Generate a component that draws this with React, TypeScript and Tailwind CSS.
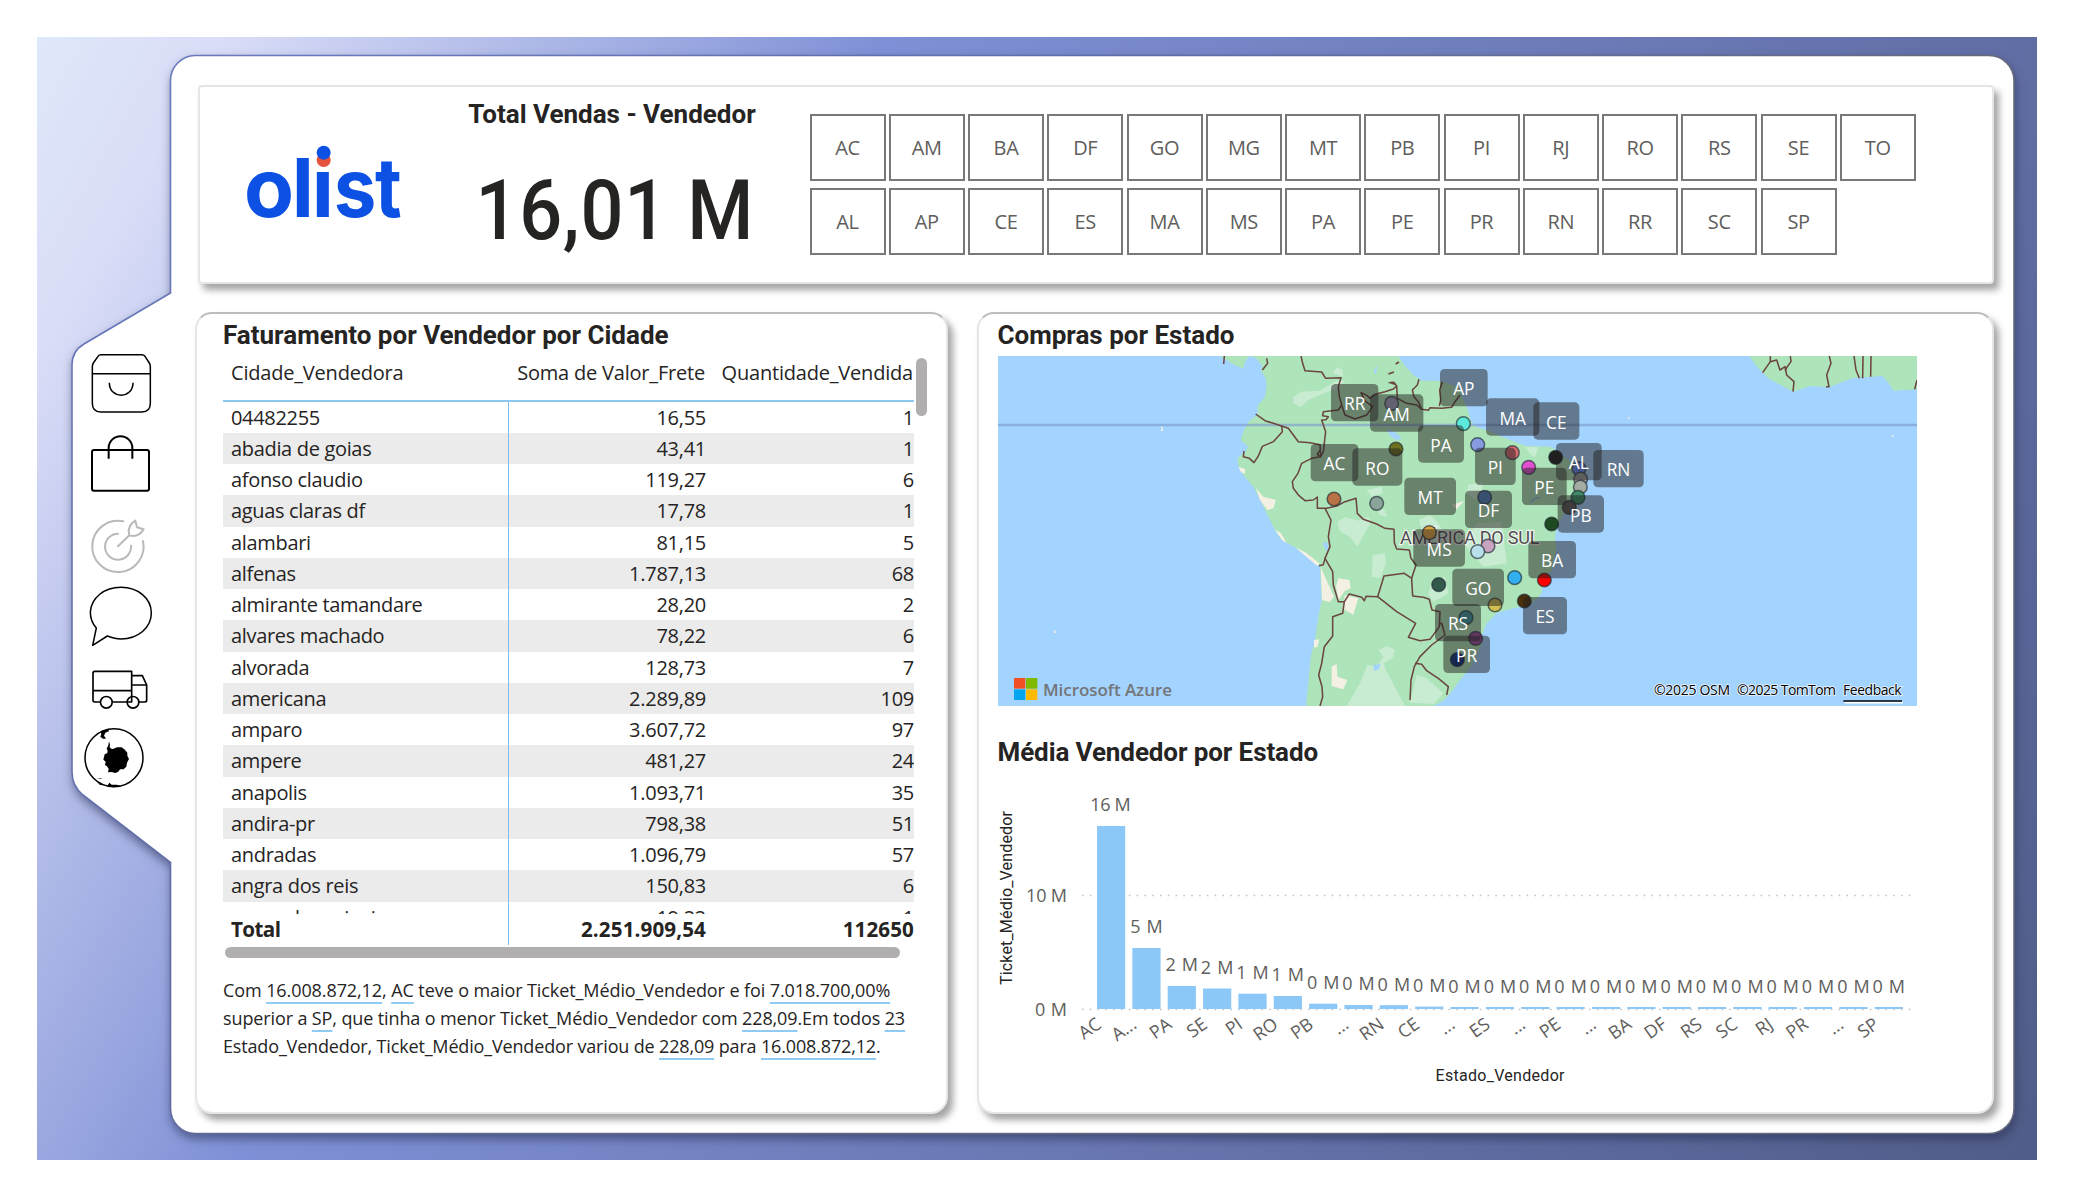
const STATES = [
  ["AC", "AM", "BA", "DF", "GO", "MG", "MT", "PB", "PI", "RJ", "RO", "RS", "SE", "TO"],
  ["AL", "AP", "CE", "ES", "MA", "MS", "PA", "PE", "PR", "RN", "RR", "SC", "SP"],
];

const ROWS: [string, string, string][] = [
  ["04482255", "16,55", "1"],
  ["abadia de goias", "43,41", "1"],
  ["afonso claudio", "119,27", "6"],
  ["aguas claras df", "17,78", "1"],
  ["alambari", "81,15", "5"],
  ["alfenas", "1.787,13", "68"],
  ["almirante tamandare", "28,20", "2"],
  ["alvares machado", "78,22", "6"],
  ["alvorada", "128,73", "7"],
  ["americana", "2.289,89", "109"],
  ["amparo", "3.607,72", "97"],
  ["ampere", "481,27", "24"],
  ["anapolis", "1.093,71", "35"],
  ["andira-pr", "798,38", "51"],
  ["andradas", "1.096,79", "57"],
  ["angra dos reis", "150,83", "6"],
  ["angra dos reis rj", "19,22", "1"],
];

// label, value label, top of the bar, baseline of the value label
const BARS: [string, string, number, number][] = [
  ["AC", "16 M", 826, 811],
  ["A...", "5 M", 948, 933],
  ["PA", "2 M", 986, 971],
  ["SE", "2 M", 988.5, 974.3],
  ["PI", "1 M", 993.7, 979],
  ["RO", "1 M", 996, 981],
  ["PB", "0 M", 1003.7, 989],
  ["...", "0 M", 1005, 990],
  ["RN", "0 M", 1005.2, 990.7],
  ["CE", "0 M", 1006.6, 992],
  ["...", "0 M", 1007, 992.7],
  ["ES", "0 M", 1007, 992.7],
  ["...", "0 M", 1007, 992.7],
  ["PE", "0 M", 1007, 992.7],
  ["...", "0 M", 1007, 992.7],
  ["BA", "0 M", 1007, 992.7],
  ["DF", "0 M", 1007, 992.7],
  ["RS", "0 M", 1007, 992.7],
  ["SC", "0 M", 1007, 992.7],
  ["RJ", "0 M", 1007, 992.7],
  ["PR", "0 M", 1007, 992.7],
  ["...", "0 M", 1007, 992.7],
  ["SP", "0 M", 1007, 992.7],
];

// label, box x, box y, box width
const PLACES: [string, number, number, number][] = [
  ["AP", 630, 57, 143],
  ["RR", 303, 102, 142],
  ["AM", 420, 133, 160],
  ["MA", 768, 145, 160],
  ["CE", 910, 157, 138],
  ["PA", 564, 226, 138],
  ["PI", 735, 293, 122],
  ["AC", 242, 282, 143],
  ["RO", 367, 295, 150],
  ["PE", 876, 353, 134],
  ["AL", 978, 279, 137],
  ["RN", 1090, 300, 151],
  ["MT", 523, 383, 155],
  ["DF", 705, 422, 141],
  ["PB", 983, 436, 139],
  ["MS", 550, 538, 155],
  ["BA", 895, 573, 143],
  ["GO", 667, 656, 155],
  ["ES", 879, 741, 132],
  ["RS", 615, 762, 138],
  ["PR", 640, 857, 140],
];

const DOTS: [number, number, string][] = [
  [485, 160, "#a4a0be"],
  [700, 221, "#5ce8da"],
  [743, 284, "#869be0"],
  [847, 308, "#d96b70"],
  [896, 352, "#e04fd0"],
  [498, 297, "#6d701f"],
  [977, 322, "#1f1f1f"],
  [1047, 356, "#6888f0"],
  [1052, 387, "#9d9d9d"],
  [1051, 411, "#a3aba3"],
  [1044, 442, "#3d8a66"],
  [1018, 472, "#5a5656"],
  [965, 522, "#1d4a20"],
  [312, 447, "#b87245"],
  [440, 460, "#8aa39b"],
  [764, 442, "#4f80c0"],
  [598, 548, "#e0a440"],
  [774, 588, "#c9a4c0"],
  [743, 605, "#b9e0ea"],
  [626, 704, "#33584c"],
  [854, 683, "#33aff0"],
  [943, 690, "#ff0000"],
  [883, 753, "#4a300a"],
  [795, 765, "#cfc050"],
  [708, 803, "#3c9aa5"],
  [737, 865, "#a050a4"],
  [682, 929, "#102e80"],
];

const BORDERS = [
  "M213 18L218 40L225 62L275 66L287 85L333 83L325 110L328 140L335 165L325 180L280 185L278 197L295 200L288 209L275 210L287 245L280 305L272 320L262 314L270 300",
  "M335 165L345 195L375 207L410 195L428 170L404 152L393 128L412 137L420 145L435 133L465 125L490 117L500 108L492 97L476 98",
  "M500 108L502 145L530 160L560 165L575 178L595 181L600 173L635 175L665 172L675 155L690 135",
  "M567 88L562 105L547 120L552 140L565 155L575 178",
  "M637 95L629 120L632 150L628 168",
  "M77 192L105 212L130 220L155 228L175 235L205 275L240 278L270 284L272 318",
  "M155 228L157 245L130 275L97 289L85 318L72 338L58 325L40 320L42 303",
  "M272 320L245 325L215 340L204 370L187 395L190 415L207 437L225 452L250 450L262 441L262 475L290 475L320 468L345 455L378 445L382 490L400 508L440 522L465 535L492 538L493 578L500 597L538 600L543 625L558 645L545 685L523 670L462 678L443 740L408 739L403 752L395 742L358 732L343 755L325 755L310 705L308 665L285 625L300 590L295 560L303 510L285 475",
  "M285 625L280 644L267 647",
  "M343 755L338 790L308 800L308 858L283 890L275 940L266 975L276 1010L278 1040L270 1068",
  "M545 685L548 738L580 742L598 748L606 780L630 785L628 830L600 868L570 872L535 862L557 820L500 785L443 740",
  "M628 822L635 820L645 855L605 885L570 920L553 950L543 990L540 1050",
  "M555 940L575 943L590 962L625 985L655 1010L650 1035",
  "M110 25L113 40L97 60",
  "M497 42L507 36M475 72L492 66M483 99L495 103",
  "M-17 18L-19 42",
  "M1621 18L1621 35L1598 68M1621 35L1640 30L1650 60L1665 50L1670 75L1692 95L1689 125",
  "M1681 18L1683 35L1672 50L1665 62",
  "M1798 18L1803 40L1790 75L1797 110L1788 110",
  "M1872 18L1878 60L1888 85M1899 18L1898 85M1923 18L1922 80M2061 90L2054 118",
];

function MapView() {
  return (
    <svg viewBox="-696 18 2757 1050" className="mt-[6px] block h-[350px] w-[919px]" preserveAspectRatio="none">
      <rect x="-696" y="18" width="2757" height="1050" fill="#a3d3ff" />
      <g fill="#aee4b9">
        <path d="M125 18L105 35L92 60L107 85L110 110L105 140L82 168L84 192L55 215L42 240L32 270L54 290L46 305L22 325L26 350L40 375L70 410L90 450L115 500L135 540L155 570L200 595L240 625L270 647L272 700L275 750L265 800L255 870L242 920L235 1000L228 1068L610 1068L640 1052L662 1030L690 990L722 950L742 910L755 880L758 850L770 820L800 790L850 775L900 765L934 732L940 700L965 660L978 600L975 560L982 525L1002 490L1045 460L1058 420L1060 380L1048 350L1028 336L1000 320L975 298L960 290L890 288L865 280L820 262L790 250L770 240L740 232L722 214L712 175L700 150L688 115L650 98L620 92L575 92L550 75L525 48L505 18Z" />
        <path d="M-30 18L-10 30L12 44L40 56L44 36L58 18L78 24L98 50L125 18Z" />
        <path d="M1558 18L1581 50L1615 85L1689 125L1740 108L1797 112L1866 85L1957 78L1975 98L1991 122L2061 118V18Z" />
      </g>
      <g fill="#c8ecd2">
        <path d="M190 140L215 125L270 122L320 92L345 92L330 112L270 135L235 150L212 172L190 160Z" />
        <path d="M308 70L320 52L338 60L340 80Z" />
        <path d="M322 515L345 502L385 512L415 500L424 515L398 560L382 590L360 560L330 545Z" />
        <path d="M428 615L465 610L468 640L450 685L425 680Z" />
        <path d="M410 420L455 410L458 430L425 440ZM440 470L465 480L470 500L448 495Z" />
        <path d="M445 900L470 888L495 900L488 925L462 938L465 955L525 1068H350L390 1000L412 945L440 950L460 920Z" />
        <path d="M567 510L600 495L625 520L640 545L575 540ZM605 690L645 680L655 730L612 755L595 735Z" />
        <path d="M715 405L760 395L755 420L775 430L740 450L710 430ZM740 520L815 515L830 640L760 650L700 580Z" />
        <path d="M885 290L925 292L915 322L900 312ZM560 975L590 985L640 1030L612 1062L540 1058Z" />
      </g>
      <g fill="#f4f1e4">
        <path d="M26 350L46 358L44 372L32 366ZM78 415L100 440L138 450L130 475L112 480L90 450ZM135 540L152 548L170 578L158 572ZM196 592L228 608L268 640L262 648L205 600Z" />
        <path d="M272 650L285 680L312 740L300 756L276 750ZM325 685L358 690L362 715L345 722L325 750L318 710ZM345 735L385 745L370 795L338 775ZM252 870L268 868L262 892L252 892Z" />
        <path d="M305 950L320 942L322 980L352 990L340 1018L305 1008ZM665 465L702 453L680 478Z" />
        <path d="M-208 229L-204 229L-200 243L-208 243L-205 238ZM-620 1009H-610V1011H-620ZM-528 842H-523V849H-528ZM1194 202H1199V206H1194ZM1985 256H1991V260H1985Z" />
      </g>
      <g fill="#a3d3ff">
        <path d="M430 65L442 45L438 72ZM470 235L500 250L515 265L500 270L480 258Z" />
        <path d="M278 580L290 575L298 600L288 602ZM430 945L452 942L445 960L432 962Z" />
      </g>
      <path d="M900 458L915 445L930 442" fill="none" stroke="#7cb8f0" strokeWidth="4" />
      <path d="M-696 225H2061" stroke="#7c97cf" strokeOpacity=".62" strokeWidth="7" />
      <g fill="none" stroke="#6b4540" strokeWidth="4.6" strokeLinejoin="round">
        {BORDERS.map((d) => (
          <path key={d} d={d} />
        ))}
      </g>
      <text
        x="510"
        y="583"
        textLength="418"
        className="font-['Roboto']"
        fontSize="54"
        fill="#4f4f4f"
        stroke="#eef2ee"
        strokeWidth="7"
        paintOrder="stroke"
      >
        AMÉRICA DO SUL
      </text>
      {DOTS.map(([x, y, c]) => (
        <circle key={`${x}-${y}`} cx={x} cy={y} r="20.5" fill={c} stroke="#1d2a33" strokeOpacity=".65" strokeWidth="4.5" />
      ))}
      {PLACES.map(([t, x, y, w]) => (
        <rect key={t} x={x} y={y} width={w} height="112" rx="14" fill="#211f20" fillOpacity=".5" />
      ))}
      <g className="font-['Open_Sans']" fontSize="52" fill="#fff" textAnchor="middle">
        {PLACES.map(([t, x, y, w]) => (
          <text key={t} x={x + w / 2} y={y + 79}>
            {t}
          </text>
        ))}
      </g>
      <rect x="-648" y="984" width="34" height="32" fill="#f25022" />
      <rect x="-612" y="984" width="34" height="32" fill="#7fba00" />
      <rect x="-648" y="1018" width="34" height="32" fill="#00a4ef" />
      <rect x="-612" y="1018" width="34" height="32" fill="#ffb900" />
      <text x="-561" y="1037" textLength="387" className="font-['Open_Sans'] font-semibold" fontSize="51" fill="#737577">
        Microsoft Azure
      </text>
      <g className="font-['Open_Sans']" fontSize="42" fill="#000" stroke="#e9f4ff" strokeWidth="5" paintOrder="stroke">
        <text x="1272" y="1036" textLength="228">
          ©2025 OSM
        </text>
        <text x="1521" y="1036" textLength="297">
          ©2025 TomTom
        </text>
        <text x="1839" y="1036" textLength="176">
          Feedback
        </text>
      </g>
      <path d="M1843 1058H2019" stroke="#fff" strokeWidth="5" />
      <path d="M1840 1053H2016" stroke="#000" strokeWidth="5" />
    </svg>
  );
}

function Chart() {
  return (
    <svg viewBox="998 767 930 330" className="block h-[330px] w-[930px] font-['Open_Sans']">
      <g stroke="#c4c4c4" strokeWidth="1.6" strokeDasharray="1.6 6.2">
        <path d="M1082 895.5H1913" />
        <path d="M1082 1009.5H1913" />
      </g>
      {BARS.map(([, , top], i) => (
        <rect key={i} x={1097 + i * 35.35} y={top} width="28.2" height={1009 - top} fill="#8bc7f7" />
      ))}
      <g fontSize="18" fill="#605e5c">
        <text x="1026" y="902" textLength="41">
          10 M
        </text>
        <text x="1035" y="1016" textLength="32">
          0 M
        </text>
        {BARS.map(([, value, , y], i) => (
          <text
            key={i}
            x={1110.8 + i * 35.35 - (value.length > 3 ? 20.5 : 16)}
            y={y}
            textLength={value.length > 3 ? 40.5 : 32.5}
          >
            {value}
          </text>
        ))}
        {BARS.map(([label], i) => (
          <text key={i} textAnchor="end" transform={`translate(${1102.5 + i * 35.35} 1027) rotate(-35)`}>
            {label}
          </text>
        ))}
      </g>
      <g className="font-['Roboto']" fontSize="16" fill="#252423">
        <text textLength="174" transform="translate(1012 985) rotate(-90)">
          Ticket_Médio_Vendedor
        </text>
        <text x="1435.5" y="1081" textLength="129">
          Estado_Vendedor
        </text>
      </g>
    </svg>
  );
}

function Nav() {
  return (
    <nav className="ml-[33px] mt-[303px] flex w-[100px] flex-col">
      <svg viewBox="0 0 300 250" className="h-[83.33px] w-[100px]" fill="none" stroke="#000" strokeWidth="4.5">
        <path d="M90 44H216Q221 44 225 49L238 69Q241 74 241 80V190Q241 216 216 216H92Q67 216 67 190V80Q67 74 70 69L84 49Q87 44 92 44Z" />
        <path d="M67 101H241M118 128C118 178 189 178 189 128" />
      </svg>
      <svg viewBox="0 250 300 250" className="h-[83.33px] w-[100px]" fill="none" stroke="#000" strokeWidth="6">
        <rect x="66" y="331" width="171" height="122" rx="6" />
        <path d="M116 357V325A35 35 0 0 1 187 325V357" />
      </svg>
      <svg
        viewBox="0 500 300 220"
        className="h-[73.33px] w-[100px]"
        fill="none"
        stroke="#b9b9b9"
        strokeWidth="6"
        strokeLinecap="round"
        strokeLinejoin="round"
      >
        <path d="M160 543A77 77 0 1 0 219 602" />
        <path d="M144 580A39 39 0 1 0 183 616" />
        <path d="M144 618L178 585C172 568 180 550 196 541L201 561L221 567C212 584 194 590 178 585" />
      </svg>
      <svg viewBox="0 720 300 230" className="h-[76.67px] w-[100px]" fill="none" stroke="#000" strokeWidth="4.5" strokeLinejoin="round">
        <path d="M79 864C66 850 61 832 61 816C64 773 103 742 153 742C204 742 244 775 244 819C244 863 204 897 153 897C139 897 125 893 112 888L68 916Z" />
      </svg>
      <svg viewBox="0 950 300 190" className="h-[63.33px] w-[100px]" fill="none" stroke="#000" strokeWidth="5" strokeLinejoin="round">
        <path d="M91 1085H74Q69 1085 69 1080V998Q69 993 74 993H185V1085H127M69 1051H185M185 1006H217L230 1034V1080Q230 1085 225 1085H207M185 1034H230M185 1085H172" />
        <circle cx="109" cy="1086" r="17.5" />
        <circle cx="189" cy="1086" r="17.5" />
      </svg>
      <svg viewBox="0 1140 300 240" className="h-[80px] w-[100px]">
        <circle cx="132" cy="1253" r="87" fill="none" stroke="#000" strokeWidth="4.5" />
        <path d="M117 1204L120 1214L119 1222L125 1227L131 1226L141 1222L155 1222L163 1228L172 1238V1247L177 1257L171 1268L169 1280L161 1288L150 1288L145 1295L136 1299L124 1296L114 1297L116 1287L111 1279L105 1275L107 1265L100 1259L104 1243L112 1239L113 1232L110 1226L115 1216Z" />
        <path d="M92 1173L114 1169L118 1173L106 1178L102 1187L108 1196L99 1196L91 1190L94 1182ZM208 1208L220 1238L215 1230ZM80 1317L97 1314L92 1317ZM84 1329L96 1331L104 1336L90 1335ZM118 1328L125 1334L140 1334L152 1337L130 1342L112 1337ZM160 1334L172 1331L164 1336Z" />
      </svg>
    </nav>
  );
}

function Mark({ children }: { children: string }) {
  return (
    <span className="underline decoration-[#8fcbf3] decoration-2 underline-offset-[5px] [text-decoration-skip-ink:none]">
      {children}
    </span>
  );
}

function SellerTable() {
  return (
    <div className="mt-[7px] flex items-start">
      <div className="w-[691px] overflow-hidden font-['Open_Sans'] text-[20px] tracking-[-0.27px] text-[#252423]">
        <div className="flex h-[42.5px] leading-[31px] tracking-[-0.2px]">
          <div className="w-[285px] pl-2">Cidade_Vendedora</div>
          <div className="w-[197px] text-right">Soma de Valor_Frete</div>
          <div className="w-[208px] text-right">Quantidade_Vendida</div>
        </div>
        <div className="h-[2px] bg-[#8ec7ef]" />
        <div className="h-[512.5px] overflow-hidden">
          {ROWS.map(([city, freight, sold], i) => (
            <div key={city} className={`flex h-[31.25px] leading-[31.25px] ${i % 2 ? "bg-[#ebebeb]" : "bg-white"}`}>
              <div className="w-[286px] border-r border-[#7fbfee] pl-2 tracking-[-0.33px]">{city}</div>
              <div className="w-[197px] text-right">{freight}</div>
              <div className="w-[208px] text-right">{sold}</div>
            </div>
          ))}
        </div>
        <div className="flex h-[31px] text-[20.6px] font-bold leading-[31px] tracking-normal">
          <div className="w-[286px] border-r border-[#7fbfee] pl-2 tracking-[-0.6px]">Total</div>
          <div className="w-[197px] text-right tracking-[0.12px]">2.251.909,54</div>
          <div className="w-[208px] text-right tracking-[0.12px]">112650</div>
        </div>
        <div className="ml-[2px] mt-[2px] h-[11px] w-[675px] rounded-full bg-[#b0aeae]" />
      </div>
      <div className="ml-[2px] mt-[1px] h-[58px] w-[11px] rounded-full bg-[#b0aeae]" />
    </div>
  );
}

export default function App() {
  return (
    <main className="h-[1200px] w-[2075px] overflow-hidden bg-white p-[37px] text-[#252423]">
      <div className="relative flex h-[1122.5px] w-[2000px] items-start overflow-hidden bg-[linear-gradient(120deg,#dfe8fa_0%,#d9ddf7_7%,#7f90d6_32%,#6370a8_72%,#505c88_100%)]">
        <svg viewBox="37 37 2000 1123" className="absolute inset-0 h-[1123px] w-full">
          <defs>
            <linearGradient id="edge" x1="0" y1="0" x2="1" y2="0.6">
              <stop offset="0" stopColor="#6b7bc2" />
              <stop offset="0.4" stopColor="#5f6da6" />
              <stop offset="0.75" stopColor="#666a7c" />
            </linearGradient>
          </defs>
          <path
            d="M195 55.5H1989A25 25 0 0 1 2014 80.5V1108.5A25 25 0 0 1 1989 1133.5H195A25 25 0 0 1 170.5 1108.5V862.5L83 795Q72 786 72 772V365Q72 351 84 344L170.5 293V80.5A25 25 0 0 1 195 55.5Z"
            fill="#fff"
            stroke="url(#edge)"
            strokeWidth="1.6"
            className="drop-shadow-[1px_5px_5px_rgba(30,35,70,0.5)]"
          />
        </svg>
        <div className="relative flex items-start">
          <Nav />
          <div className="ml-[25px] flex flex-col pt-[47.5px]">
            <header className="ml-[2.5px] flex h-[199.5px] w-[1796px] items-start rounded-[4px] border-2 border-[#e6e6e6] bg-white shadow-[5px_6px_7px_rgba(0,0,0,0.36)]">
              <svg viewBox="0 0 540 300" className="ml-[35.5px] mt-[43.5px] h-[100px] w-[180px]">
                <g className="font-['Inter'] font-bold" fontSize="245" fill="#0c50e4">
                  <text x="27 170 230" y="261">
                    oli
                  </text>
                  <text x="296" y="261" textLength="128" lengthAdjust="spacingAndGlyphs">
                    s
                  </text>
                  <text x="420" y="261" textLength="80" lengthAdjust="spacingAndGlyphs">
                    t
                  </text>
                </g>
                <rect x="236" y="40" width="60" height="86" fill="#fff" />
                <circle cx="266" cy="90" r="21" fill="#e5533d" />
                <circle cx="266" cy="68" r="21" fill="#0c50e4" />
              </svg>
              <div className="ml-[37px] flex w-[320px] flex-col items-center pt-[12px] font-['Roboto']">
                <h1 className="text-[26px] font-bold leading-[30px]">Total Vendas - Vendedor</h1>
                <div className="ml-[6px] mt-[40px] scale-x-[0.9] whitespace-nowrap text-[84px] font-medium leading-none tracking-[0.8px]">
                  16,01 M
                </div>
              </div>
              <div className="ml-[37.5px] flex flex-col gap-[6.5px] pt-[27.5px]">
                {STATES.map((row) => (
                  <div key={row[0]} className="flex gap-[3.25px]">
                    {row.map((s) => (
                      <button
                        key={s}
                        className="h-[67px] w-[76px] border-2 border-[#7a7876] bg-white pt-px font-['Open_Sans'] text-[20px] tracking-[-0.4px] text-[#605e5c]"
                      >
                        {s}
                      </button>
                    ))}
                  </div>
                ))}
              </div>
            </header>
            <div className="mt-[28px] flex gap-[28.5px]">
              <section className="h-[802px] w-[753px] rounded-[17px] border-2 border-[#e6e6e6] border-t-[#bdbdbd] bg-white pl-[26px] pt-[6px] shadow-[5px_6px_7px_rgba(0,0,0,0.36)]">
                <h2 className="font-['Roboto'] text-[26px] font-bold leading-[30px]">Faturamento por Vendedor por Cidade</h2>
                <SellerTable />
                <p className="mt-[18px] font-['Open_Sans'] text-[18px] leading-[28px]">
                  <span className="block whitespace-nowrap tracking-[-0.09px]">
                    Com <Mark>16.008.872,12</Mark>, <Mark>AC</Mark> teve o maior Ticket_Médio_Vendedor e foi <Mark>7.018.700,00%</Mark>
                  </span>
                  <span className="block whitespace-nowrap tracking-[-0.12px]">
                    superior a <Mark>SP</Mark>, que tinha o menor Ticket_Médio_Vendedor com <Mark>228,09</Mark>.Em todos <Mark>23</Mark>
                  </span>
                  <span className="block whitespace-nowrap tracking-[-0.16px]">
                    Estado_Vendedor, Ticket_Médio_Vendedor variou de <Mark>228,09</Mark> para <Mark>16.008.872,12</Mark>.
                  </span>
                </p>
              </section>
              <section className="h-[802px] w-[1017.5px] rounded-[17px] border-2 border-[#e6e6e6] border-t-[#bdbdbd] bg-white pl-[19px] pt-[6px] shadow-[5px_6px_7px_rgba(0,0,0,0.36)]">
                <h2 className="font-['Roboto'] text-[26px] font-bold leading-[30px]">Compras por Estado</h2>
                <MapView />
                <h2 className="mt-[31px] font-['Roboto'] text-[26px] font-bold leading-[30px] tracking-[-0.1px]">
                  Média Vendedor por Estado
                </h2>
                <Chart />
              </section>
            </div>
          </div>
        </div>
      </div>
    </main>
  );
}
